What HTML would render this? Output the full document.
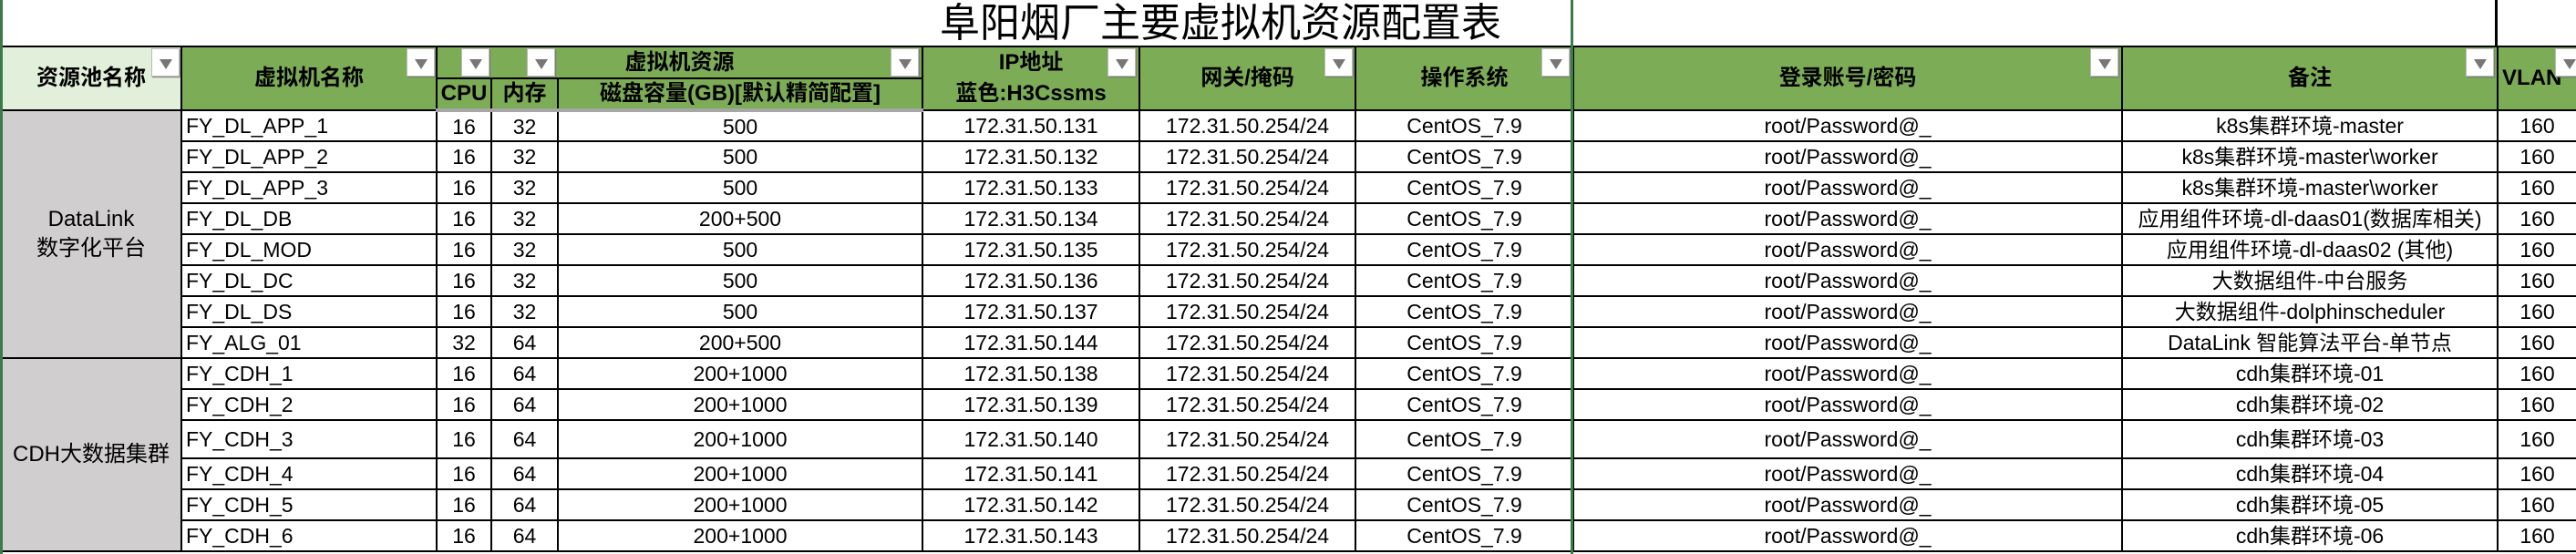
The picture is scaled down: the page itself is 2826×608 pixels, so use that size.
<!DOCTYPE html>
<html><head><meta charset="utf-8"><style>
*{margin:0;padding:0;box-sizing:border-box}
body{width:2826px;height:608px;overflow:hidden;background:#fff;position:relative;font-family:"Liberation Sans","Noto Sans CJK SC",sans-serif;color:#000}
.title{position:absolute;left:1031px;top:0;width:620px;height:51px;font-size:44px;line-height:51px;white-space:nowrap}
table{position:absolute;left:0;top:50px;border-collapse:collapse;table-layout:fixed;width:2826px}
td{border:2px solid #000;font-size:23px;text-align:center;white-space:nowrap;overflow:hidden;padding:0;line-height:24px}
td.l{text-align:left;padding-left:4px}
.h td{background:#7dac56;font-weight:bold;font-size:24px}
.h td.p{background:#e2efda}
.h2 td{border-bottom:4px solid #a6a6a6}
.g{background:#d0cecf;font-size:24px;line-height:32px}
.dd{position:absolute;top:53px;width:31px;height:31px;background:#fff;border:1px solid #bbb;box-shadow:1px 1px 1px #777}
.dd:after{content:"";position:absolute;left:8px;top:11px;border-left:7px solid transparent;border-right:7px solid transparent;border-top:11px solid #777}
.vl{position:absolute;top:0;height:608px;background:#3d7a4a}
</style></head><body>
<div class="title">阜阳烟厂主要虚拟机资源配置表</div>
<div style="position:absolute;left:2737px;top:0;width:3px;height:52px;background:#000"></div>
<table>
<colgroup><col style="width:198px"><col style="width:280px"><col style="width:60px"><col style="width:73px"><col style="width:400px"><col style="width:238px"><col style="width:237px"><col style="width:239px"><col style="width:602px"><col style="width:412px"><col style="width:87px"></colgroup>
<tr class="h" style="height:35px"><td class="p" rowspan="2">资源池名称</td><td rowspan="2">虚拟机名称</td><td colspan="3">虚拟机资源</td><td rowspan="2" style="line-height:34px">IP地址<br>蓝色:H3Cssms</td><td rowspan="2">网关/掩码</td><td rowspan="2">操作系统</td><td rowspan="2">登录账号/密码</td><td rowspan="2">备注</td><td rowspan="2" style="text-align:left;padding-left:4px">VLAN</td></tr>
<tr class="h h2" style="height:35px"><td>CPU</td><td>内存</td><td>磁盘容量(GB)[默认精简配置]</td></tr>
<tr style="height:34px"><td class="g" rowspan="8">DataLink<br>数字化平台</td><td class="l">FY_DL_APP_1</td><td>16</td><td>32</td><td>500</td><td>172.31.50.131</td><td>172.31.50.254/24</td><td>CentOS_7.9</td><td>root/Password@_</td><td>k8s集群环境-master</td><td>160</td></tr>
<tr style="height:34px"><td class="l">FY_DL_APP_2</td><td>16</td><td>32</td><td>500</td><td>172.31.50.132</td><td>172.31.50.254/24</td><td>CentOS_7.9</td><td>root/Password@_</td><td>k8s集群环境-master\worker</td><td>160</td></tr>
<tr style="height:34px"><td class="l">FY_DL_APP_3</td><td>16</td><td>32</td><td>500</td><td>172.31.50.133</td><td>172.31.50.254/24</td><td>CentOS_7.9</td><td>root/Password@_</td><td>k8s集群环境-master\worker</td><td>160</td></tr>
<tr style="height:34px"><td class="l">FY_DL_DB</td><td>16</td><td>32</td><td>200+500</td><td>172.31.50.134</td><td>172.31.50.254/24</td><td>CentOS_7.9</td><td>root/Password@_</td><td>应用组件环境-dl-daas01(数据库相关)</td><td>160</td></tr>
<tr style="height:34px"><td class="l">FY_DL_MOD</td><td>16</td><td>32</td><td>500</td><td>172.31.50.135</td><td>172.31.50.254/24</td><td>CentOS_7.9</td><td>root/Password@_</td><td>应用组件环境-dl-daas02 (其他)</td><td>160</td></tr>
<tr style="height:34px"><td class="l">FY_DL_DC</td><td>16</td><td>32</td><td>500</td><td>172.31.50.136</td><td>172.31.50.254/24</td><td>CentOS_7.9</td><td>root/Password@_</td><td>大数据组件-中台服务</td><td>160</td></tr>
<tr style="height:34px"><td class="l">FY_DL_DS</td><td>16</td><td>32</td><td>500</td><td>172.31.50.137</td><td>172.31.50.254/24</td><td>CentOS_7.9</td><td>root/Password@_</td><td>大数据组件-dolphinscheduler</td><td>160</td></tr>
<tr style="height:34px"><td class="l">FY_ALG_01</td><td>32</td><td>64</td><td>200+500</td><td>172.31.50.144</td><td>172.31.50.254/24</td><td>CentOS_7.9</td><td>root/Password@_</td><td>DataLink 智能算法平台-单节点</td><td>160</td></tr>
<tr style="height:34px"><td class="g" rowspan="6">CDH大数据集群</td><td class="l">FY_CDH_1</td><td>16</td><td>64</td><td>200+1000</td><td>172.31.50.138</td><td>172.31.50.254/24</td><td>CentOS_7.9</td><td>root/Password@_</td><td>cdh集群环境-01</td><td>160</td></tr>
<tr style="height:34px"><td class="l">FY_CDH_2</td><td>16</td><td>64</td><td>200+1000</td><td>172.31.50.139</td><td>172.31.50.254/24</td><td>CentOS_7.9</td><td>root/Password@_</td><td>cdh集群环境-02</td><td>160</td></tr>
<tr style="height:42px"><td class="l">FY_CDH_3</td><td>16</td><td>64</td><td>200+1000</td><td>172.31.50.140</td><td>172.31.50.254/24</td><td>CentOS_7.9</td><td>root/Password@_</td><td>cdh集群环境-03</td><td>160</td></tr>
<tr style="height:34px"><td class="l">FY_CDH_4</td><td>16</td><td>64</td><td>200+1000</td><td>172.31.50.141</td><td>172.31.50.254/24</td><td>CentOS_7.9</td><td>root/Password@_</td><td>cdh集群环境-04</td><td>160</td></tr>
<tr style="height:34px"><td class="l">FY_CDH_5</td><td>16</td><td>64</td><td>200+1000</td><td>172.31.50.142</td><td>172.31.50.254/24</td><td>CentOS_7.9</td><td>root/Password@_</td><td>cdh集群环境-05</td><td>160</td></tr>
<tr style="height:34px"><td class="l">FY_CDH_6</td><td>16</td><td>64</td><td>200+1000</td><td>172.31.50.143</td><td>172.31.50.254/24</td><td>CentOS_7.9</td><td>root/Password@_</td><td>cdh集群环境-06</td><td>160</td></tr>
</table>
<div class="vl" style="left:0;width:3px"></div>
<div class="vl" style="left:1723px;width:3px"></div>
<div class="dd" style="left:166px"></div>
<div class="dd" style="left:446px"></div>
<div class="dd" style="left:506px"></div>
<div class="dd" style="left:578px"></div>
<div class="dd" style="left:977px"></div>
<div class="dd" style="left:1215px"></div>
<div class="dd" style="left:1453px"></div>
<div class="dd" style="left:1691px"></div>
<div class="dd" style="left:2293px"></div>
<div class="dd" style="left:2705px"></div>
<div class="dd" style="left:2803px"></div>
</body></html>
